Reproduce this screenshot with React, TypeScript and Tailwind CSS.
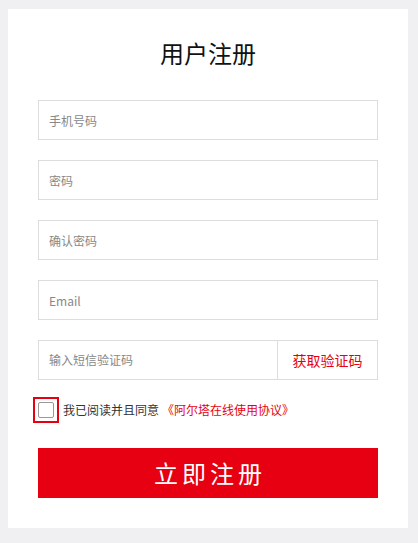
import React, { useState } from 'react';

const font = { fontFamily: '"Microsoft YaHei", "Noto Sans CJK SC", sans-serif' };

const Field: React.FC<{ placeholder: string; type?: string }> = ({ placeholder, type = 'text' }) => (
  <input
    type={type}
    placeholder={placeholder}
    className="block h-10 w-full border border-[#dddddd] bg-white px-[10px] text-[12px] text-[#333] outline-none placeholder:text-[#888]"
  />
);

export default function App() {
  const [agree, setAgree] = useState(false);

  return (
    <div className="min-h-[543px] bg-[#f0f0f2] pl-2 pr-[10px] pt-[9px] pb-[15px]" style={font}>
      <div className="bg-white px-[30px] pt-[27px] pb-[30px]">
        <h1 className="text-center text-[24px] leading-[34px] text-[#111]">用户注册</h1>

        <form className="mt-[30px] flex flex-col gap-5" onSubmit={e => e.preventDefault()}>
          <Field placeholder="手机号码" />
          <Field placeholder="密码" type="password" />
          <Field placeholder="确认密码" type="password" />
          <Field placeholder="Email" />

          <div className="flex h-10 border border-[#dddddd]">
            <input
              placeholder="输入短信验证码"
              className="min-w-0 flex-1 px-[10px] text-[12px] outline-none placeholder:text-[#888]"
            />
            <button type="button" className="w-[100px] border-l border-[#dddddd] text-[14px] text-[#e60012]">
              获取验证码
            </button>
          </div>
        </form>

        <div className="-ml-[5px] mt-[17px] flex items-center text-[12px]">
          <label className="flex h-[26px] w-[26px] items-center justify-center border-2 border-[#e60012]">
            <input
              type="checkbox"
              checked={agree}
              onChange={e => setAgree(e.target.checked)}
              className="h-[16px] w-[16px] cursor-pointer appearance-none rounded-[2px] border border-[#999] bg-white checked:bg-[#e60012]"
            />
          </label>
          <span className="ml-1 text-[#333]">我已阅读并且同意</span>
          <a href="#" className="ml-[3px] text-[#e60012]">《阿尔塔在线使用协议》</a>
        </div>

        <button
          type="button"
          className="mt-[25px] block h-[50px] w-full bg-[#e60012] pl-[4px] text-[24px] tracking-[4px] text-white"
        >
          立即注册
        </button>
      </div>
    </div>
  );
}
